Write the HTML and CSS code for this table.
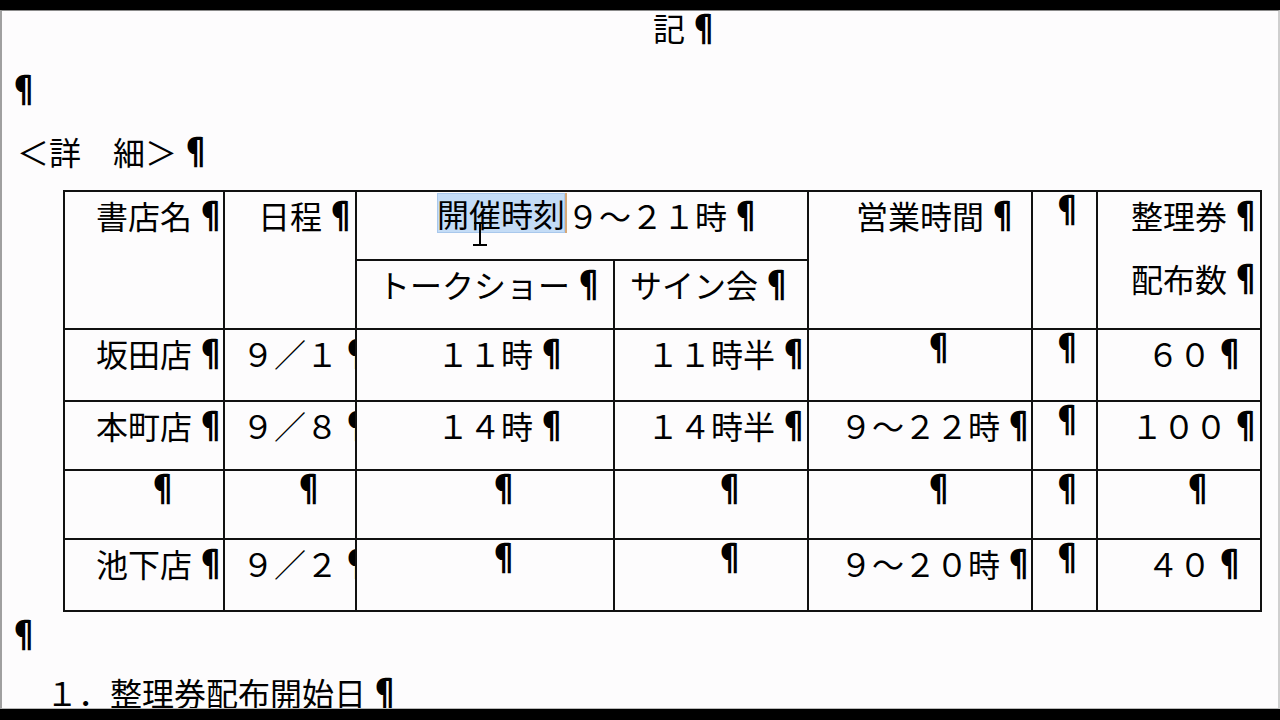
FILE: index.html
```html
<!DOCTYPE html>
<html lang="ja">
<head>
<meta charset="utf-8">
<title>記</title>
<link rel="stylesheet" href="styles.css">
</head>
<body>
<div class="screen">
  <div class="bar-top"></div>
  <div class="page">
    <div class="doc">
      <p class="line ki">記<span class="p">¶</span></p>
      <p class="line"><span class="p p0">¶</span></p>
      <p class="line">＜詳　細＞<span class="p">¶</span></p>
      <table class="grid">
        <colgroup>
          <col class="c1"><col class="c2"><col class="c3"><col class="c4"><col class="c5"><col class="c6"><col class="c7">
        </colgroup>
        <tbody>
          <tr class="r69">
            <td rowspan="2">書店名<span class="p">¶</span></td>
            <td rowspan="2">日程<span class="p">¶</span></td>
            <td colspan="2"><span class="sel">開催時刻</span>９～２１時<span class="p">¶</span></td>
            <td rowspan="2">営業時間<span class="p">¶</span></td>
            <td rowspan="2"><span class="p pe p6">¶</span></td>
            <td rowspan="2">
              <div>整理券<span class="p">¶</span></div>
              <div class="second">配布数<span class="p">¶</span></div>
            </td>
          </tr>
          <tr class="r69">
            <td class="sub-a">トークショー<span class="p">¶</span></td>
            <td class="sub-b">サイン会<span class="p">¶</span></td>
          </tr>
          <tr class="r72">
            <td>坂田店<span class="p">¶</span></td>
            <td>９／１<span class="p">¶</span></td>
            <td>１１時<span class="p">¶</span></td>
            <td>１１時半<span class="p">¶</span></td>
            <td><span class="p pe">¶</span></td>
            <td><span class="p pe p6">¶</span></td>
            <td>６０<span class="p">¶</span></td>
          </tr>
          <tr class="r69">
            <td>本町店<span class="p">¶</span></td>
            <td>９／８<span class="p">¶</span></td>
            <td>１４時<span class="p">¶</span></td>
            <td>１４時半<span class="p">¶</span></td>
            <td>９～２２時<span class="p">¶</span></td>
            <td><span class="p pe p6">¶</span></td>
            <td>１００<span class="p">¶</span></td>
          </tr>
          <tr class="r69">
            <td><span class="p pe">¶</span></td>
            <td><span class="p pe">¶</span></td>
            <td><span class="p pe">¶</span></td>
            <td><span class="p pe">¶</span></td>
            <td><span class="p pe">¶</span></td>
            <td><span class="p pe p6">¶</span></td>
            <td><span class="p pe">¶</span></td>
          </tr>
          <tr class="r72">
            <td>池下店<span class="p">¶</span></td>
            <td>９／２<span class="p">¶</span></td>
            <td><span class="p pe">¶</span></td>
            <td><span class="p pe">¶</span></td>
            <td>９～２０時<span class="p">¶</span></td>
            <td><span class="p pe p6">¶</span></td>
            <td>４０<span class="p">¶</span></td>
          </tr>
        </tbody>
      </table>
      <p class="line after"><span class="p p0">¶</span></p>
      <p class="line num">１．整理券配布開始日<span class="p">¶</span></p>
    </div>
  </div>
  <div class="bar-bottom"></div>
  <svg class="ibeam" width="20" height="28" viewBox="0 0 20 28" aria-hidden="true">
    <path d="M4 2h12M10 2v22M3 24h14" fill="none" stroke="#000" stroke-width="2"/>
  </svg>
</div>
</body>
</html>
```

FILE: styles.css
```css
html, body {
  margin: 0;
  padding: 0;
  background: #000;
}

.screen {
  width: 1280px;
  height: 720px;
  display: flex;
  flex-direction: column;
  overflow: hidden;
  position: relative;
  background: #000;
}

.bar-top {
  flex: none;
  height: 10px;
  background: #000;
}

.page {
  flex: none;
  height: 699px;
  box-sizing: border-box;
  border-top: 1px solid #8a8a8a;
  border-bottom: 1px solid #b8b8b8;
  border-left: 2px solid #a0a0a0;
  border-right: 2px solid #cfcfcf;
  background: #fdfcfd;
  overflow: hidden;
  padding-left: 15px;
}

.bar-bottom {
  flex: 1;
  background: #000;
}

.doc {
  font-family: "Noto Sans CJK JP", "Noto Sans CJK SC", sans-serif;
  font-size: 32px;
  color: #000;
}

.line {
  margin: 0;
  line-height: 62px;
  white-space: nowrap;
}

.ki {
  text-align: center;
  padding-left: 43px;
  line-height: 32px;
  margin-bottom: 15px;
}

.after {
  line-height: 42px;
}

.num {
  margin-top: 7px;
  padding-left: 29px;
}

/* pilcrow mark: takes no advance, ink sits right after the text */
.p {
  display: inline-block;
  width: 32px;
  margin-right: -32px;
  text-indent: 3px;
  text-align: left;
  white-space: nowrap;
  font-weight: 700;
  transform: scaleY(1.12);
  transform-origin: 50% 72%;
}

.p0 {
  text-indent: -9px;
}

.pe {
  transform: translateY(-6px) scaleY(1.12);
}

.p6 {
  text-indent: -13px;
}

.grid {
  margin-top: 8px;
  margin-left: 46px;
  width: 1199px;
  table-layout: fixed;
  border-collapse: separate;
  border-spacing: 0;
  border-top: 2px solid #111;
  border-left: 2px solid #111;
}

.c1 { width: 160px; }
.c2 { width: 132px; }
.c3 { width: 258px; }
.c4 { width: 194px; }
.c5 { width: 224px; }
.c6 { width: 65px; }
.c7 { width: 164px; }

.r69 { height: 69px; }
.r72 { height: 72px; }

.grid td {
  border-right: 2px solid #111;
  border-bottom: 2px solid #111;
  padding: 0;
  text-align: center;
  vertical-align: top;
  line-height: 46px;
  white-space: nowrap;
  overflow: hidden;
}

.grid .second {
  margin-top: 17px;
}

.grid .sub-a {
  padding-right: 22px;
}

.grid .sub-b {
  padding-right: 34px;
}

.sel {
  display: inline-block;
  vertical-align: top;
  margin-top: 1px;
  height: 40px;
  line-height: 40px;
  background: #c4dcf6;
  box-shadow: inset 0 0 0 1px #a9c8ec;
  border-right: 2px solid #d6a878;
}

.ibeam {
  position: absolute;
  left: 470px;
  top: 221px;
}
```
